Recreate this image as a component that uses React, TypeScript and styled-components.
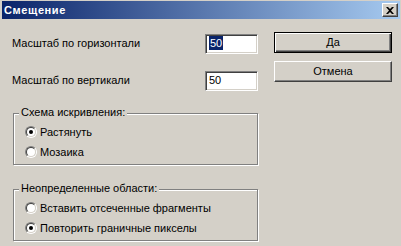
import React from "react";
import styled, { createGlobalStyle } from "styled-components";

const Global = createGlobalStyle`
  html, body { margin: 0; padding: 0; background: #d4d0c8; }
  body { font-family: "Liberation Sans", Arial, sans-serif; font-size: 11px; color: #000; }
`;

const Window = styled.div`
  width: 401px;
  height: 246px;
  box-sizing: border-box;
  padding: 1px 1px 0 2px;
  background: #d4d0c8;
  display: flex;
  flex-direction: column;
  overflow: hidden;
`;

const TitleBar = styled.div`
  height: 18px;
  display: flex;
  align-items: center;
  justify-content: space-between;
  padding: 0 2px 0 2px;
  background: linear-gradient(to right, #0a246a, #a6caf0);
`;

const Title = styled.span`
  color: #fff;
  font-weight: bold;
  font-size: 11px;
  letter-spacing: 0.6px;
  line-height: 13px;
`;

const CloseBtn = styled.div`
  width: 16px;
  height: 14px;
  box-sizing: border-box;
  background: #d4d0c8;
  border: 1px solid;
  border-color: #fff #404040 #404040 #fff;
  box-shadow: inset -1px -1px 0 #808080;
  display: flex;
  align-items: center;
  justify-content: center;
`;

const Body = styled.div`
  display: flex;
  align-items: flex-start;
  padding-left: 10px;
  gap: 16px;
`;

const LeftCol = styled.div`
  width: 246px;
  padding-top: 15px;
  display: flex;
  flex-direction: column;
`;

const RightCol = styled.div`
  width: 118px;
  padding-top: 13px;
  display: flex;
  flex-direction: column;
  gap: 8px;
`;

const FieldRow = styled.div<{ $gap?: number }>`
  height: 19px;
  display: flex;
  align-items: center;
  justify-content: space-between;
  margin-top: ${(p) => p.$gap ?? 0}px;
`;

const Label = styled.span`
  line-height: 13px;
  margin-top: -1px;
`;

const Edit = styled.div`
  width: 53px;
  height: 20px;
  box-sizing: border-box;
  background: #fff;
  border: 1px solid;
  border-color: #808080 #fff #fff #808080;
  box-shadow: inset 1px 1px 0 #404040, inset -1px -1px 0 #d4d0c8;
  padding: 2px 0 0 3px;
  line-height: 13px;
`;

const Selected = styled.span`
  background: #0a246a;
  color: #fff;
  padding: 1px 1px 1px 1px;
`;

const Group = styled.div<{ $top: number }>`
  position: relative;
  margin: ${(p) => p.$top}px 0 0 1px;
  width: 245px;
  height: 52px;
  box-sizing: border-box;
  border: 1px solid #808080;
  box-shadow: inset 1px 1px 0 #fff, 1px 1px 0 #fff;
  padding: 8px 0 0 11px;
  display: flex;
  flex-direction: column;
`;

const Caption = styled.span`
  position: absolute;
  top: -8px;
  left: 5px;
  padding: 0 2px;
  background: #d4d0c8;
  line-height: 13px;
`;

const RadioRow = styled.div`
  height: 20px;
  display: flex;
  align-items: center;
  gap: 3px;
`;

const RadioOuter = styled.span`
  width: 12px;
  height: 12px;
  box-sizing: border-box;
  border-radius: 50%;
  border: 1px solid;
  border-color: #808080 #fff #fff #808080;
  display: flex;
`;

const RadioInner = styled.span<{ $on?: boolean }>`
  flex: 1;
  border-radius: 50%;
  border: 1px solid;
  border-color: #404040 #d4d0c8 #d4d0c8 #404040;
  background: #fff;
  display: flex;
  align-items: center;
  justify-content: center;
  &::after {
    content: "";
    width: 4px;
    height: 4px;
    border-radius: 50%;
    background: ${(p) => (p.$on ? "#000" : "transparent")};
  }
`;

const RadioLabel = styled.span`
  line-height: 13px;
`;

const Button = styled.div<{ $default?: boolean }>`
  height: 21px;
  box-sizing: border-box;
  display: flex;
  align-items: center;
  justify-content: center;
  background: #d4d0c8;
  border: 1px solid;
  border-color: ${(p) => (p.$default ? "#000" : "#fff #404040 #404040 #fff")};
  box-shadow: ${(p) =>
    p.$default
      ? "inset 1px 1px 0 #fff, inset -1px -1px 0 #404040, inset -2px -2px 0 #808080"
      : "inset -1px -1px 0 #808080"};
  line-height: 13px;
`;

const Radio = ({ on, label }: { on?: boolean; label: string }) => (
  <RadioRow>
    <RadioOuter>
      <RadioInner $on={on} />
    </RadioOuter>
    <RadioLabel>{label}</RadioLabel>
  </RadioRow>
);

export default function App() {
  return (
    <>
      <Global />
      <Window>
        <TitleBar>
          <Title>Смещение</Title>
          <CloseBtn>
            <svg width="8" height="7" viewBox="0 0 8 7">
              <path d="M0 0h2l2 2 2-2h2L5 3.5 8 7H6L4 5 2 7H0l3-3.5z" fill="#000" />
            </svg>
          </CloseBtn>
        </TitleBar>
        <Body>
          <LeftCol>
            <FieldRow>
              <Label>Масштаб по горизонтали</Label>
              <Edit>
                <Selected>50</Selected>
              </Edit>
            </FieldRow>
            <FieldRow $gap={18}>
              <Label>Масштаб по вертикали</Label>
              <Edit>50</Edit>
            </FieldRow>
            <Group $top={23}>
              <Caption>Схема искривления:</Caption>
              <Radio on label="Растянуть" />
              <Radio label="Мозаика" />
            </Group>
            <Group $top={24}>
              <Caption>Неопределенные области:</Caption>
              <Radio label="Вставить отсеченные фрагменты" />
              <Radio on label="Повторить граничные пикселы" />
            </Group>
          </LeftCol>
          <RightCol>
            <Button $default>Да</Button>
            <Button>Отмена</Button>
          </RightCol>
        </Body>
      </Window>
    </>
  );
}
